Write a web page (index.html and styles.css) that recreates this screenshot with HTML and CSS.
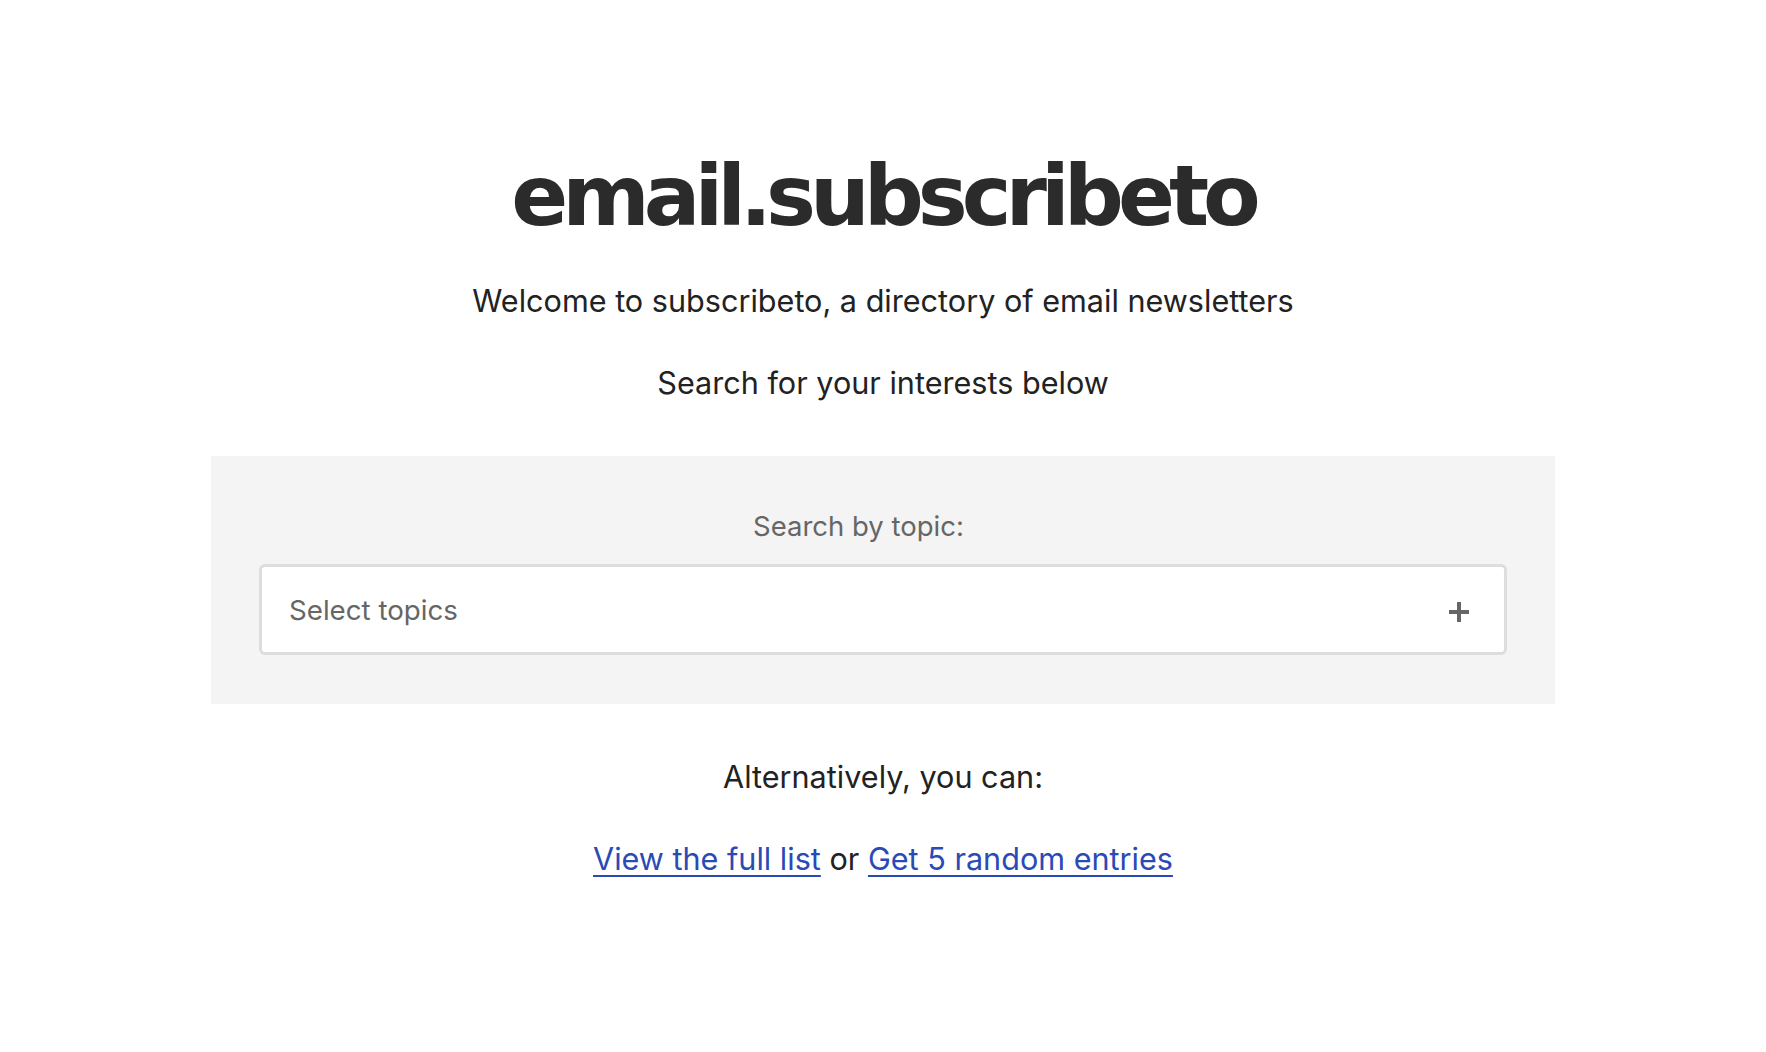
FILE: index.html
```html
<!DOCTYPE html>
<html lang="en">
<head>
<meta charset="utf-8">
<title>email.subscribeto</title>
<link rel="stylesheet" href="styles.css">
</head>
<body>
<main class="page">
  <h1 class="title">email.subscribeto</h1>
  <p class="lead lead-welcome">Welcome to subscribeto, a directory of email newsletters</p>
  <p class="lead lead-search">Search for your interests below</p>
  <section class="search-panel">
    <label class="search-label">Search by topic:</label>
    <div class="select">
      <span class="placeholder">Select topics</span>
      <svg class="plus" width="20" height="20" viewBox="0 0 20 20" aria-hidden="true">
        <rect x="8" y="0" width="4" height="20" fill="#666"/>
        <rect x="0" y="8" width="20" height="4" fill="#666"/>
      </svg>
    </div>
  </section>
  <p class="lead lead-alt">Alternatively, you can:</p>
  <p class="lead links"><a href="#" class="link">View the full list</a> or <a href="#" class="link">Get 5 random entries</a></p>
</main>
</body>
</html>
```
FILE: styles.css
```css
html, body {
  margin: 0;
  padding: 0;
  background: #ffffff;
}

body {
  font-family: Inter, "Liberation Sans", sans-serif;
  color: #222222;
}

.page {
  width: 1344px;
  margin: 0 auto;
  display: flex;
  flex-direction: column;
  align-items: stretch;
}

.title {
  margin: 146px 0 0 0;
  font-family: "DejaVu Sans", sans-serif;
  font-weight: 700;
  font-size: 84px;
  line-height: 100px;
  height: 100px;
  letter-spacing: -6px;
  color: #2b2b2b;
  text-align: center;
}

.lead {
  margin: 0;
  font-size: 30.6px;
  line-height: 40px;
  text-align: center;
}

.lead-welcome { margin-top: 35px; }
.lead-search { margin-top: 42px; }
.lead-alt { margin-top: 53px; }
.links { margin-top: 42px; }

.search-panel {
  margin-top: 53px;
  background: #f4f4f4;
  padding: 52px 48px 49px;
  display: flex;
  flex-direction: column;
}

.search-label {
  display: block;
  font-size: 27.5px;
  line-height: 36px;
  color: #666666;
  text-align: center;
  margin-right: 49px;
}

.select {
  margin-top: 20px;
  height: 85px;
  border: 3px solid #dddddd;
  border-radius: 6px;
  background: #ffffff;
  display: flex;
  align-items: center;
  justify-content: space-between;
  padding: 0 35px 0 27px;
}

.placeholder {
  font-size: 27.7px;
  color: #666666;
}

.plus {
  display: block;
  margin-top: 5px;
}

.link {
  color: #2a4ab6;
  text-decoration: underline;
  text-underline-offset: 5px;
  text-decoration-thickness: 2px;
}
```
